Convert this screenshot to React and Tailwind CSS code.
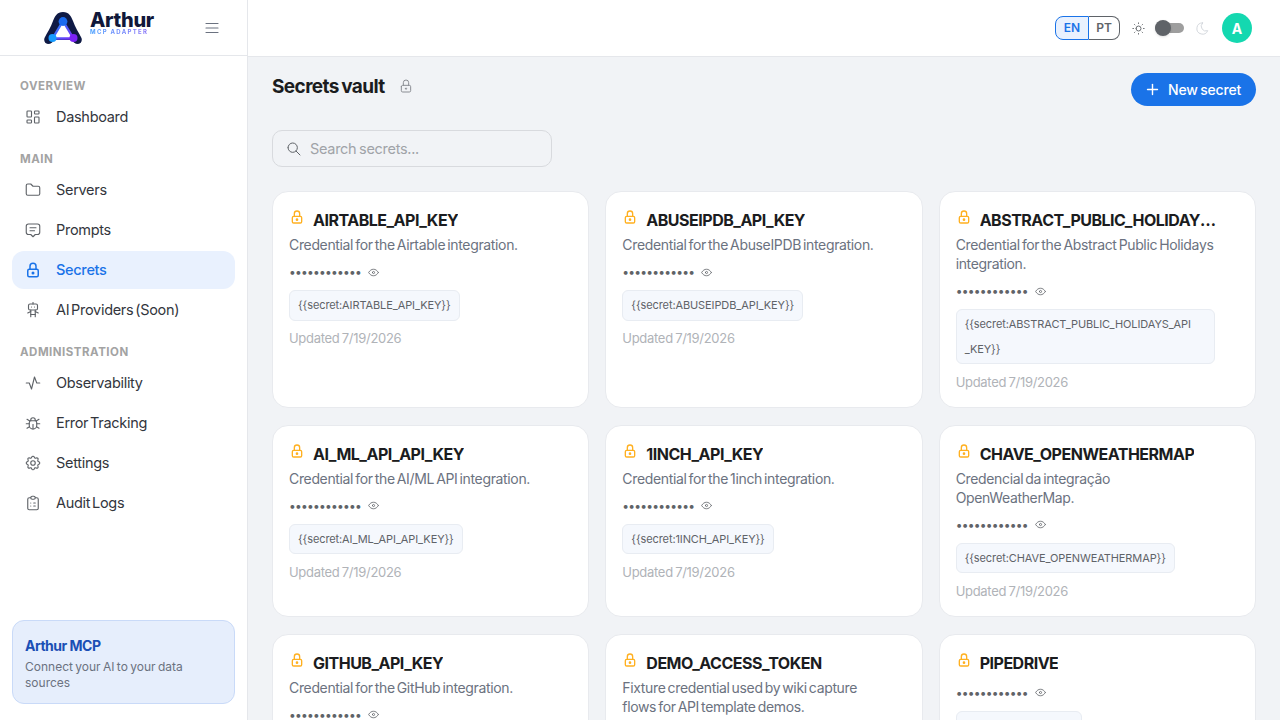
import React from "react";
import {
  TbLayoutDashboard,
  TbFolder,
  TbMessage2,
  TbLock,
  TbRobot,
  TbActivity,
  TbBug,
  TbSettings,
  TbClipboardList,
  TbMenu2,
  TbSun,
  TbMoon,
  TbEye,
  TbSearch,
  TbPlus,
} from "react-icons/tb";

const navGroups = [
  { label: "OVERVIEW", items: [{ name: "Dashboard", icon: TbLayoutDashboard }] },
  {
    label: "MAIN",
    items: [
      { name: "Servers", icon: TbFolder },
      { name: "Prompts", icon: TbMessage2 },
      { name: "Secrets", icon: TbLock, active: true },
      { name: "AI Providers (Soon)", icon: TbRobot },
    ],
  },
  {
    label: "ADMINISTRATION",
    items: [
      { name: "Observability", icon: TbActivity },
      { name: "Error Tracking", icon: TbBug },
      { name: "Settings", icon: TbSettings },
      { name: "Audit Logs", icon: TbClipboardList },
    ],
  },
];

const secrets = [
  { name: "AIRTABLE_API_KEY", desc: "Credential for the Airtable integration." },
  { name: "ABUSEIPDB_API_KEY", desc: "Credential for the AbuseIPDB integration." },
  {
    name: "ABSTRACT_PUBLIC_HOLIDAYS_API_KEY",
    chip: "ABSTRACT_PUBLIC_HOLIDAYS_API\u200b_KEY",
    desc: "Credential for the Abstract Public Holidays integration.",
  },
  { name: "AI_ML_API_API_KEY", desc: "Credential for the AI/ML API integration." },
  { name: "1INCH_API_KEY", desc: "Credential for the 1inch integration." },
  { name: "CHAVE_OPENWEATHERMAP", desc: "Credencial da integração OpenWeatherMap." },
  { name: "GITHUB_API_KEY", desc: "Credential for the GitHub integration." },
  { name: "DEMO_ACCESS_TOKEN", desc: "Fixture credential used by wiki capture flows for API template demos." },
  { name: "PIPEDRIVE" },
];

const Logo = () => (
  <svg width="38" height="32" viewBox="0 0 38 32" className="shrink-0">
    <defs>
      <linearGradient id="tri" x1="0" y1="0" x2="1" y2="1">
        <stop offset="0" stopColor="#1a8cff" />
        <stop offset="1" stopColor="#7b2ff7" />
      </linearGradient>
    </defs>
    <path
      d="M19 0C13 0 11 4 9 9C7 15 3 21 0.5 26C-0.5 29 1 32 4 32C7 32 9 30 10 28L28 28C29 30 31 32 34 32C37 32 38.5 29 37.5 26C35 21 31 15 29 9C27 4 25 0 19 0Z"
      fill="#0f1a45"
    />
    <path d="M19 9L8.5 26.5H29.5Z" fill="#ffffff" stroke="url(#tri)" strokeWidth="2.4" strokeLinejoin="round" />
    <circle cx="19" cy="9.5" r="4.4" fill="#1a6cf0" />
    <circle cx="8.5" cy="26" r="4" fill="#159bff" />
    <circle cx="29.5" cy="26" r="4" fill="#7b22f5" />
  </svg>
);

const Sidebar = () => (
  <aside className="flex h-full w-[248px] shrink-0 flex-col border-r border-[#e5e7eb] bg-white">
    <div className="flex h-[56px] shrink-0 items-center border-b border-[#e5e7eb] pl-[44px] pr-[26px]">
      <Logo />
      <div className="mb-[8px] ml-[8px] flex flex-col">
        <span className="text-[20px] leading-[16px] font-extrabold tracking-[-0.3px] text-[#10183a]">Arthur</span>
        <span className="bg-gradient-to-r from-[#3b9bff] to-[#8b6cf7] bg-clip-text text-[6px] leading-[7px] font-bold tracking-[1.3px] text-transparent">
          MCP ADAPTER
        </span>
      </div>
      <TbMenu2 className="ml-auto text-[#6b7280]" size={18} strokeWidth={1.5} />
    </div>

    <nav className="px-3 pt-[22px]">
      {navGroups.map((group) => (
        <div key={group.label} className="mb-[15.5px]">
          <p className="mb-[3.5px] px-2 text-[11.5px] leading-[16px] font-bold tracking-[0.5px] text-[#a3a3a3]">{group.label}</p>
          <div className="flex flex-col gap-[2px]">
            {group.items.map((item) => (
              <a
                key={item.name}
                className={`flex h-[38px] items-center rounded-xl pl-[12px] text-[14.5px] tracking-[-0.3px] [word-spacing:-2px] ${
                  item.active ? "bg-[#e9f1fe] font-medium text-[#1a73e8]" : "text-[#33363d]"
                }`}
              >
                <item.icon
                  size={18}
                  strokeWidth={item.active ? 2 : 1.5}
                  className={`mr-[14px] shrink-0 ${item.active ? "text-[#1a73e8]" : "text-[#5f6368]"}`}
                />
                {item.name}
              </a>
            ))}
          </div>
        </div>
      ))}
    </nav>

    <div className="mt-auto px-3 pb-4">
      <div className="h-[84px] rounded-xl border border-[#c9daf8] bg-[#e6eefc] px-3 pt-[15px]">
        <p className="text-[14px] leading-[20px] font-bold tracking-[-0.5px] text-[#1a4fb5]">Arthur MCP</p>
        <p className="mt-[3px] text-[12px] leading-[16px] text-[#6b7280] [word-spacing:-1px]">Connect your AI to your data sources</p>
      </div>
    </div>
  </aside>
);

const Topbar = () => (
  <header className="flex h-[57px] shrink-0 items-center justify-end border-b border-[#e5e7eb] bg-white pr-[28px]">
    <div className="flex h-[24px] text-[12px] font-semibold">
      <span className="flex w-[34px] items-center justify-center rounded-l-lg border border-[#1a73e8] bg-[#e9f1fe] text-[#1a73e8]">EN</span>
      <span className="flex w-[31px] items-center justify-center rounded-r-lg border border-l-0 border-[#5f6368] text-[#5f6368]">PT</span>
    </div>
    <TbSun size={15} strokeWidth={1.5} className="ml-[11px] text-[#5f6368]" />
    <div className="relative ml-[9px] h-[10px] w-[29px] rounded-full bg-[#9e9e9e]">
      <span className="absolute top-[-3px] left-0 h-[16px] w-[16px] rounded-full bg-[#5f6368] shadow" />
    </div>
    <TbMoon size={15} strokeWidth={1.5} className="ml-[11px] text-[#d1d5db]" />
    <span className="ml-[12px] flex h-[30px] w-[30px] items-center justify-center rounded-full bg-[#14d8b0] text-[14px] font-bold text-white">A</span>
  </header>
);

const SecretCard = ({ name, chip, desc }) => (
  <div className="rounded-2xl border border-[#e8eaee] bg-white p-4">
    <div className="pr-6">
      <div className="flex h-[24px] items-center">
        <TbLock size={16} className="mt-[-6px] shrink-0 text-[#ffb020]" />
        <h3 className="mr-[-4px] ml-[8px] truncate text-[16px] leading-[24px] font-bold tracking-[-0.5px] text-[#1b1c20]">{name}</h3>
      </div>
      {desc && (
        <p className="mt-[3px] text-[14px] leading-[19px] tracking-[-0.35px] text-[#6b7280] [word-spacing:-1.5px]">{desc}</p>
      )}
      <div className="mt-[9px] flex h-[18px] items-center text-[#5f6368]">
        <span className="text-[12px] leading-[18px] tracking-[-0.75px]">••••••••••••</span>
        <TbEye size={13} strokeWidth={1.5} className="ml-[6px]" />
      </div>
      <div className="mt-[9px] w-fit rounded-md border border-[#e8ecf2] bg-[#f5f8fd] px-2 py-[2px] text-[11px] leading-[24.5px] tracking-[-0.1px] break-words text-[#5f6368]">
        {`{{secret:${chip || name}}}`}
      </div>
      <p className="mt-[8.5px] text-[13px] leading-[18px] tracking-[-0.3px] text-[#b0b3b8] [word-spacing:-1px]">Updated 7/19/2026</p>
    </div>
  </div>
);

export default function App() {
  return (
    <div className="flex h-screen overflow-hidden bg-[#f1f3f6] font-['Inter',sans-serif]">
      <Sidebar />
      <div className="flex min-w-0 flex-1 flex-col">
        <Topbar />
        <main className="overflow-hidden px-6 pt-4">
          <div className="flex items-start justify-between">
            <div className="flex h-[28px] items-center">
              <h1 className="text-[19px] font-bold tracking-[-0.6px] text-[#1b1c20] [word-spacing:-1.5px]">Secrets vault</h1>
              <TbLock size={16} strokeWidth={1.5} className="mt-[-2px] ml-[13px] text-[#8a8d93]" />
            </div>
            <button className="flex h-[33px] items-center rounded-full bg-[#1a73e8] pr-[15px] pl-[13px] text-[14px] font-medium tracking-[-0.2px] text-white [word-spacing:-1px]">
              <TbPlus size={17} className="mr-[7px]" />
              New secret
            </button>
          </div>

          <div className="mt-[24px] flex h-[37px] w-[280px] items-center rounded-[10px] border border-[#d8dade] px-[13px] text-[#a0a3a8]">
            <TbSearch size={16} strokeWidth={1.5} className="text-[#5f6368]" />
            <span className="ml-[8px] text-[14.5px] tracking-[-0.3px] [word-spacing:-1px]">Search secrets...</span>
          </div>

          <div className="mt-[24px] grid grid-cols-3 gap-x-4 gap-y-[17px]">
            {secrets.map((secret) => (
              <SecretCard key={secret.name} {...secret} />
            ))}
          </div>
        </main>
      </div>
    </div>
  );
}
